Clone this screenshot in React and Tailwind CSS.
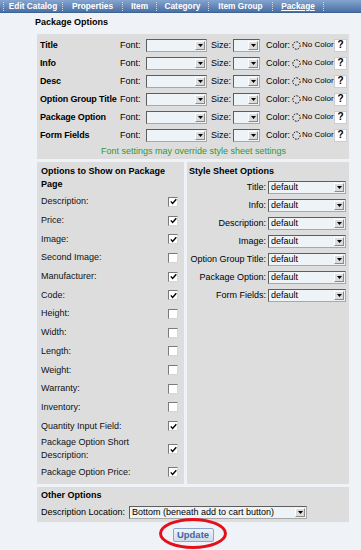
import React from "react";

function Sel({ className = "", text = "" }) {
  return (
    <div
      className={
        "flex items-center bg-[#eef3f7] border border-t-[#5e5e5e] border-l-[#5e5e5e] border-r-[#a8a8a8] border-b-[#a8a8a8] " +
        className
      }
    >
      <span className="flex-1 pl-[2px] text-[9px] leading-none whitespace-nowrap overflow-hidden text-black">
        {text}
      </span>
      <div className="mr-px flex h-[9px] w-[10px] flex-none items-center justify-center border border-t-white border-l-white border-r-[#8a8a8a] border-b-[#8a8a8a] bg-[#dcdcdc]">
        <svg width="5" height="3" viewBox="0 0 5 3">
          <path d="M0 0H5L2.5 3Z" fill="#000" />
        </svg>
      </div>
    </div>
  );
}

function Check({ on }) {
  return (
    <div className="flex h-[10px] w-[10px] items-center justify-center border border-t-[#7a7a7a] border-l-[#7a7a7a] border-r-[#d6d6d6] border-b-[#d6d6d6] bg-white">
      {on && (
        <svg width="7" height="7" viewBox="0 0 7 7">
          <path d="M0.8 3.4 L2.6 5.4 L6.3 1.2" stroke="#000" strokeWidth="1.4" fill="none" />
        </svg>
      )}
    </div>
  );
}

function Sep() {
  return <div className="h-[9px] w-px flex-none border-l border-dotted border-[#c9d8ec]" />;
}

function Tab({ className, children, active }) {
  return (
    <div className={"flex flex-none justify-center text-[8.3px] font-bold leading-none text-white " + className}>
      <span className={active ? "underline" : ""}>{children}</span>
    </div>
  );
}

const fontRows = ["Title", "Info", "Desc", "Option Group Title", "Package Option", "Form Fields"];

const checks = [
  ["Description:", true],
  ["Price:", true],
  ["Image:", true],
  ["Second Image:", false],
  ["Manufacturer:", true],
  ["Code:", true],
  ["Height:", false],
  ["Width:", false],
  ["Length:", false],
  ["Weight:", false],
  ["Warranty:", false],
  ["Inventory:", false],
  ["Quantity Input Field:", true],
];

const styleRows = ["Title:", "Info:", "Description:", "Image:", "Option Group Title:", "Package Option:", "Form Fields:"];

export default function App() {
  return (
    <div className="h-[550px] w-[361px] overflow-hidden bg-[#eff3f7] font-['Liberation_Sans',Arial,sans-serif] text-black">
      {/* Tab bar */}
      <div className="flex h-[13px] items-center border-b border-[#3e6395] bg-linear-to-b from-[#85a5d0] to-[#4b70a4] pl-[3px]">
        <Sep />
        <Tab className="w-[58px]">Edit Catalog</Tab>
        <Sep />
        <Tab className="w-[59px]">Properties</Tab>
        <Sep />
        <Tab className="w-[33px]">Item</Tab>
        <Sep />
        <Tab className="w-[51px]">Category</Tab>
        <Sep />
        <Tab className="w-[63px]">Item Group</Tab>
        <Sep />
        <Tab className="w-[50px]" active>
          Package
        </Tab>
        <Sep />
      </div>

      <div className="mt-[3px] pl-[35px] text-[9px] font-bold leading-[12px]">Package Options</div>

      <div className="ml-[37px] mt-[6px] w-[312px]">
        {/* Font settings panel */}
        <div className="bg-[#dddddd] pb-px pl-[3px] pr-[2px] pt-[2px]">
          {fontRows.map((r) => (
            <div key={r} className="flex h-[18px] items-center text-[9px] leading-none">
              <div className="w-[80px] flex-none whitespace-nowrap font-bold tracking-[-0.15px]">{r}</div>
              <div className="w-[26px] flex-none">Font:</div>
              <Sel className="h-[13px] w-[61px] flex-none" />
              <div className="ml-[4px] w-[22px] flex-none">Size:</div>
              <Sel className="h-[13px] w-[27px] flex-none" />
              <div className="ml-[6px] w-[26px] flex-none">Color:</div>
              <svg width="9" height="9" viewBox="0 0 9 9" className="flex-none">
                <circle cx="4.5" cy="4.5" r="3.7" fill="none" stroke="#000" strokeWidth="1" strokeDasharray="1.6 1.2" />
              </svg>
              <div className="ml-[1px] flex-none whitespace-nowrap text-[8px]">No Color</div>
              <div className="ml-auto flex h-[13px] w-[13px] flex-none items-center justify-center border border-[#cccccc] bg-white text-[10px] font-bold">
                ?
              </div>
            </div>
          ))}
          <div className="flex h-[14px] items-center justify-center text-[9px] leading-none text-[#2f9a34]">
            Font settings may override style sheet settings
          </div>
        </div>

        {/* Middle panels */}
        <div className="mt-[3px] flex h-[322px] gap-[3px]">
          <div className="w-[147px] flex-none bg-[#dddddd] pl-[4px] pr-[6px] pt-[3px]">
            <div className="mb-[1.5px] text-[9px] font-bold leading-[13px]">
              Options to Show on Package Page
            </div>
            {checks.map(([l, on]) => (
              <div key={l} className="flex h-[18.7px] items-center justify-between text-[9px] leading-none text-[#111]">
                <span className="whitespace-nowrap">{l}</span>
                <Check on={on} />
              </div>
            ))}
            <div className="flex h-[27.3px] items-center justify-between text-[9px] leading-[13px] text-[#111]">
              <span>
                Package Option Short
                <br />
                Description:
              </span>
              <Check on />
            </div>
            <div className="flex h-[18.7px] items-center justify-between text-[9px] leading-none text-[#111]">
              <span className="whitespace-nowrap">Package Option Price:</span>
              <Check on />
            </div>
          </div>

          <div className="flex-1 bg-[#dddddd] pt-[3px]">
            <div className="pl-[2px] text-[9px] font-bold leading-[13px]">Style Sheet Options</div>
            {styleRows.map((r) => (
              <div key={r} className="flex h-[18px] items-center text-[9px] leading-none">
                <div className="flex w-[81px] flex-none justify-end whitespace-nowrap pr-[2px]">{r}</div>
                <Sel className="h-[13px] w-[78px] flex-none" text="default" />
              </div>
            ))}
          </div>
        </div>

        {/* Other options */}
        <div className="mt-[3px] h-[35px] bg-[#dddddd] pl-[4px] pt-[2px]">
          <div className="text-[9px] font-bold leading-[12px]">Other Options</div>
          <div className="mt-[4px] flex h-[14px] items-center text-[9px] leading-none">
            <div className="w-[88px] flex-none whitespace-nowrap">Description Location:</div>
            <Sel className="h-[13px] w-[178px] flex-none" text="Bottom (beneath add to cart button)" />
          </div>
        </div>

        {/* Update button */}
        <div className="mt-[6px] flex justify-center">
          <div className="relative">
            <div className="flex h-[14px] w-[41px] items-center justify-center rounded-[2px] border border-[#8ea7c9] bg-linear-to-b from-[#eef3fa] to-[#cfdcec] text-[9.5px] font-bold leading-none text-[#46669a]">
              Update
            </div>
            <div className="absolute left-[-14px] top-[-10px] h-[31px] w-[68px] rounded-[50%] border-[3px] border-[#e3101b]" />
          </div>
        </div>
      </div>
    </div>
  );
}
